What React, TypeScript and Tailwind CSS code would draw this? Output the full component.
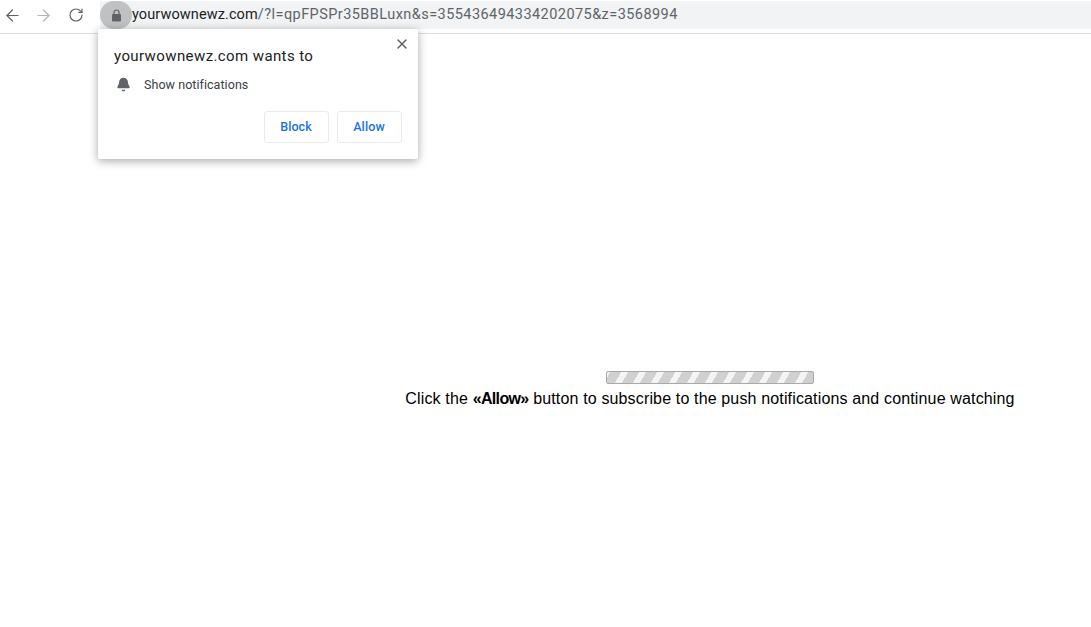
import { ArrowLeft, ArrowRight, RotateCw, Bell, X } from "lucide-react";

export default function App() {
  return (
    <div className="relative h-[627px] w-[1091px] overflow-hidden bg-white font-['Liberation_Sans',sans-serif]">
      <header className="flex h-[34px] items-start border-b border-[#d9dadc] bg-white pt-px">
        <nav className="flex h-[28px] w-[100px] shrink-0 items-center pl-[3px] gap-[12px]">
          <ArrowLeft size={19} strokeWidth={1.5} className="text-[#5f6368]" />
          <ArrowRight size={19} strokeWidth={1.5} className="text-[#b4b6b9]" />
          <RotateCw size={16} strokeWidth={1.8} className="ml-[3px] text-[#5f6368]" />
        </nav>
        <div className="flex h-[28px] flex-1 items-center bg-[#f1f3f4]">
          <div className="flex h-[28px] w-[32px] shrink-0 items-center justify-center rounded-full bg-[#bfc1c3]">
            <svg width="11" height="13" viewBox="0 0 11 13" fill="none">
              <path d="M3 5V3.5a2.5 2.5 0 0 1 5 0V5" stroke="#5f6368" strokeWidth="1.2" />
              <rect x="1" y="5" width="9" height="7.5" rx="1" fill="#5f6368" />
            </svg>
          </div>
          <p className="font-['Roboto',sans-serif] text-[14.5px] tracking-[0.44px] text-[#5f6368]">
            <span className="tracking-[0.1px] text-[#202124]">yourwownewz.com</span>/?l=qpFPSPr35BBLuxn&amp;s=355436494334202075&amp;z=3568994
          </p>
        </div>
      </header>

      <div className="absolute left-[98px] top-[29px] h-[130px] w-[320px] rounded-[2px] bg-white font-['Roboto',sans-serif] shadow-[0_2px_10px_rgba(0,0,0,0.35)]">
        <button className="absolute right-[8px] top-[7px] text-[#5f6368]">
          <X size={16} strokeWidth={2.2} />
        </button>
        <div className="px-4 pt-[18px]">
          <h2 className="text-[15px] leading-[18px] tracking-[0.4px] text-[#202124]">yourwownewz.com wants to</h2>
          <div className="mt-[12px] flex items-center">
            <Bell size={15} fill="#5f6368" className="ml-[2px] -translate-y-px text-[#5f6368]" />
            <span className="ml-[13px] text-[12.5px] leading-[16px] tracking-[0.05px] text-[#3c4043]">Show notifications</span>
          </div>
          <div className="mt-[18px] flex justify-end gap-[8px]">
            <button className="h-[32px] w-[65px] rounded-[3px] border border-[#e8eaed] pr-px text-[12.5px] font-medium tracking-[0.1px] text-[#1a73e8]">Block</button>
            <button className="h-[32px] w-[65px] rounded-[3px] border border-[#e8eaed] pr-px text-[12.5px] font-medium tracking-[0.1px] text-[#1a73e8]">Allow</button>
          </div>
        </div>
      </div>

      <main className="flex flex-col items-center pl-[329px] pt-[337px]">
        <div className="h-[13px] w-[208px] rounded-[2px] border border-[#a9a9a9] bg-[repeating-linear-gradient(-60deg,#d0d0d0_0_9.6px,#f4f4f4_9.6px_15.6px)]" />
        <p className="mt-[5px] whitespace-nowrap text-[16px] leading-[20px] tracking-[0.15px] text-black">
          Click the <b className="tracking-[-0.65px]">«Allow»</b> button to subscribe to the push notifications and continue watching
        </p>
      </main>
    </div>
  );
}
